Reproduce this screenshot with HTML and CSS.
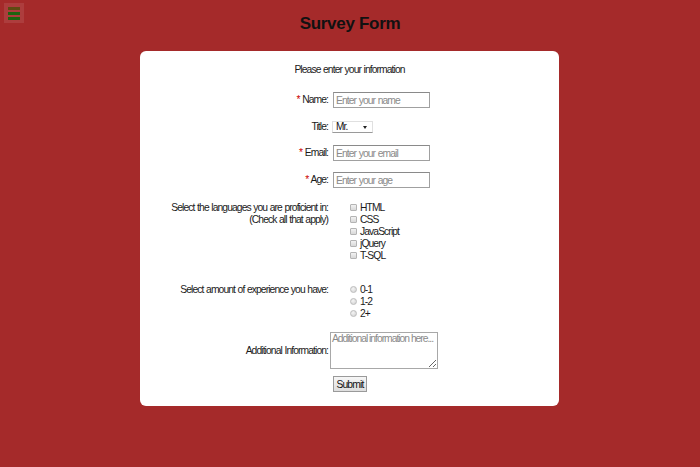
FILE: index.html
```html
<!DOCTYPE html>
<html lang="en">
<head>
<meta charset="utf-8">
<title>Survey Form</title>
<link rel="stylesheet" href="styles.css">
</head>
<body>
<button class="menu" type="button" aria-label="Menu">
  <span class="bar bar-top"></span>
  <span class="bar"></span>
  <span class="bar"></span>
</button>
<header class="header">
  <h1 class="title">Survey Form</h1>
</header>
<main class="card">
  <p class="intro">Please enter your information</p>
  <form class="form">
    <div class="row row-name">
      <label class="label" for="name"><span class="req">*</span> Name:</label>
      <div class="field"><input class="text" id="name" type="text" placeholder="Enter your name"></div>
    </div>
    <div class="row row-title">
      <label class="label" for="title">Title:</label>
      <div class="field"><span class="select-wrap"><select class="select" id="title"><option>Mr.</option><option>Mrs.</option><option>Ms.</option></select></span></div>
    </div>
    <div class="row row-email">
      <label class="label" for="email"><span class="req">*</span> Email:</label>
      <div class="field"><input class="text" id="email" type="email" placeholder="Enter your email"></div>
    </div>
    <div class="row row-age">
      <label class="label" for="age"><span class="req">*</span> Age:</label>
      <div class="field"><input class="text" id="age" type="text" placeholder="Enter your age"></div>
    </div>
    <div class="row row-top row-lang">
      <div class="label">Select the languages you are proficient in:<br>(Check all that apply)</div>
      <div class="field list">
        <label class="opt"><input class="check" type="checkbox">HTML</label>
        <label class="opt"><input class="check" type="checkbox">CSS</label>
        <label class="opt"><input class="check" type="checkbox">JavaScript</label>
        <label class="opt"><input class="check" type="checkbox">jQuery</label>
        <label class="opt"><input class="check" type="checkbox">T-SQL</label>
      </div>
    </div>
    <div class="row row-top row-exp">
      <div class="label">Select amount of experience you have:</div>
      <div class="field list">
        <label class="opt"><input class="radio" type="radio" name="exp">0-1</label>
        <label class="opt"><input class="radio" type="radio" name="exp">1-2</label>
        <label class="opt"><input class="radio" type="radio" name="exp">2+</label>
      </div>
    </div>
    <div class="row row-info">
      <label class="label" for="info">Additional Information:</label>
      <div class="field"><textarea class="area" id="info" placeholder="Additional information here..."></textarea></div>
    </div>
    <div class="row row-submit">
      <div class="label"></div>
      <div class="field"><button class="submit" type="submit">Submit</button></div>
    </div>
  </form>
</main>
</body>
</html>
```
FILE: styles.css
```css
html, body {
  margin: 0;
  padding: 0;
}
body {
  background: #a52a2a;
  font-family: "Liberation Sans", Arial, sans-serif;
  font-size: 10.3px;
  letter-spacing: -0.9px;
  word-spacing: 0.6px;
  color: #1a1a1a;
  height: 467px;
  overflow: hidden;
}
.menu {
  position: absolute;
  left: 4px;
  top: 3px;
  width: 20px;
  height: 20px;
  padding: 4px 4px 0 4px;
  margin: 0;
  border: 0;
  background: rgba(255, 255, 255, 0.09);
  display: flex;
  flex-direction: column;
  gap: 2px;
  box-sizing: border-box;
}
.bar {
  display: block;
  width: 12px;
  height: 3px;
  background: #1e6410;
}
.bar-top {
  background: #5e4a12;
}
.header {
  padding-top: 14px;
  height: 37px;
  box-sizing: border-box;
}
.title {
  margin: 0;
  text-align: center;
  font-family: "Liberation Sans", Arial, sans-serif;
  font-size: 17px;
  line-height: 20px;
  font-weight: bold;
  color: #111;
  letter-spacing: -0.3px;
  word-spacing: 0;
}
.card {
  width: 419px;
  margin: 14px auto 0 140px;
  background: #fff;
  border-radius: 6px;
  padding: 13px 0 14px 0;
  box-sizing: border-box;
}
.intro {
  margin: 0;
  text-align: center;
  line-height: 12px;
}
.form {
  display: flex;
  flex-direction: column;
}
.row {
  display: grid;
  grid-template-columns: 188px 1fr;
  column-gap: 5px;
  align-items: center;
  min-height: 16px;
}
.row-top {
  align-items: start;
}
.label {
  text-align: right;
  line-height: 12px;
}
.req {
  color: #c00;
}
.row-name { margin-top: 16px; }
.row-title { margin-top: 11px; }
.row-email { margin-top: 10px; }
.row-age { margin-top: 11px; }
.row-lang { margin-top: 14px; }
.row-exp { margin-top: 22px; }
.row-info { margin-top: 12px; }
.row-submit { margin-top: 7px; }
.text {
  display: block;
  width: 97px;
  height: 16px;
  box-sizing: border-box;
  border: 1px solid #a0a0a0;
  border-top-color: #8a8a8a;
  padding: 0 2px;
  margin: 0;
  font: inherit;
  font-size: 10.3px;
  letter-spacing: -0.9px;
  word-spacing: 0.6px;
  color: #111;
  outline: none;
}
.text::placeholder,
.area::placeholder {
  color: #8a8a8a;
}
.select-wrap {
  position: relative;
  display: block;
  width: 41px;
  margin-left: -1px;
}
.select-wrap::after {
  content: "";
  position: absolute;
  right: 6px;
  top: 5px;
  border-left: 2px solid transparent;
  border-right: 2px solid transparent;
  border-top: 3px solid #222;
}
.select {
  display: block;
  -webkit-appearance: none;
  appearance: none;
  width: 41px;
  height: 12px;
  box-sizing: border-box;
  border: 1px solid #e0e0e0;
  border-bottom-color: #9a9a9a;
  border-radius: 0;
  background: #fff;
  padding: 0 0 0 3px;
  margin: 0;
  font: inherit;
  font-size: 10px;
  line-height: 10px;
  letter-spacing: -0.8px;
  color: #111;
  outline: none;
}
.list {
  display: flex;
  flex-direction: column;
  padding-left: 17px;
}
.opt {
  display: flex;
  align-items: center;
  height: 12px;
  line-height: 12px;
}
.check {
  -webkit-appearance: none;
  appearance: none;
  width: 7px;
  height: 7px;
  margin: 0 3px 2px 0;
  border: 1px solid #b4b4b4;
  background: linear-gradient(#f2f2f2, #d8d8d8);
  box-sizing: border-box;
  border-radius: 1px;
}
.radio {
  -webkit-appearance: none;
  appearance: none;
  width: 7px;
  height: 7px;
  margin: 0 3px 2px 0;
  border: 1px solid #bcbcbc;
  background: radial-gradient(circle at 40% 35%, #f4f4f4, #cfcfcf);
  box-sizing: border-box;
  border-radius: 50%;
}
.area {
  display: block;
  width: 108px;
  height: 37px;
  margin: 0 0 0 -3px;
  box-sizing: border-box;
  border: 1px solid #a8a8a8;
  padding: 0 1px;
  font: inherit;
  font-size: 10.3px;
  line-height: 12px;
  letter-spacing: -1px;
  word-spacing: 0;
  color: #111;
  outline: none;
}
.submit {
  display: block;
  width: 34px;
  height: 16px;
  box-sizing: border-box;
  border: 1px solid #9a9a9a;
  background: linear-gradient(#f6f6f6, #dedede);
  padding: 0;
  margin: 0;
  font: inherit;
  font-size: 10.3px;
  letter-spacing: -0.8px;
  color: #111;
}
```
